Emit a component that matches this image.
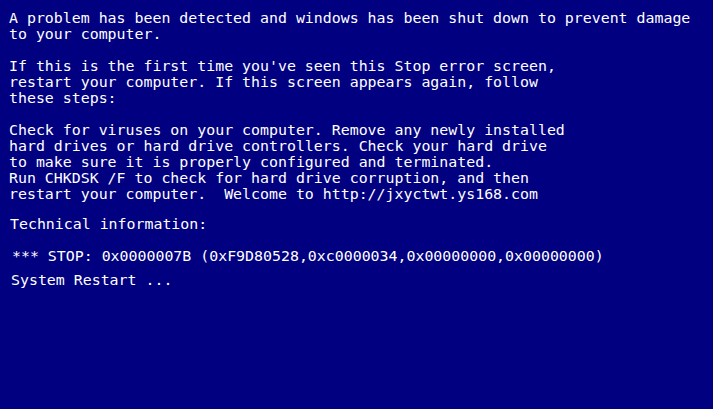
export default function App() {
  return (
    <div className="min-h-screen w-full bg-[#000080] text-white pt-[10px] pl-[9px] font-['DejaVu_Sans_Mono',monospace] text-[14.9px] leading-[16px] whitespace-pre">
      {/* Intro */}
      <p>A problem has been detected and windows has been shut down to prevent damage</p>
      <p>to your computer.</p>

      <div className="mt-[16px]">
        <p>If this is the first time you've seen this Stop error screen,</p>
        <p>restart your computer. If this screen appears again, follow</p>
        <p>these steps:</p>
      </div>

      <div className="mt-[16px]">
        <p>Check for viruses on your computer. Remove any newly installed</p>
        <p>hard drives or hard drive controllers. Check your hard drive</p>
        <p>to make sure it is properly configured and terminated.</p>
        <p>Run CHKDSK /F to check for hard drive corruption, and then</p>
        <p>restart your computer.  Welcome to http://jxyctwt.ys168.com</p>
      </div>

      {/* Technical info */}
      <p className="mt-[14px] pl-[1px]">Technical information:</p>
      <p className="mt-[16px] pl-[3px]">*** STOP: 0x0000007B (0xF9D80528,0xc0000034,0x00000000,0x00000000)</p>
      <p className="mt-[8px] pl-[2px]">System Restart ...</p>
    </div>
  );
}
